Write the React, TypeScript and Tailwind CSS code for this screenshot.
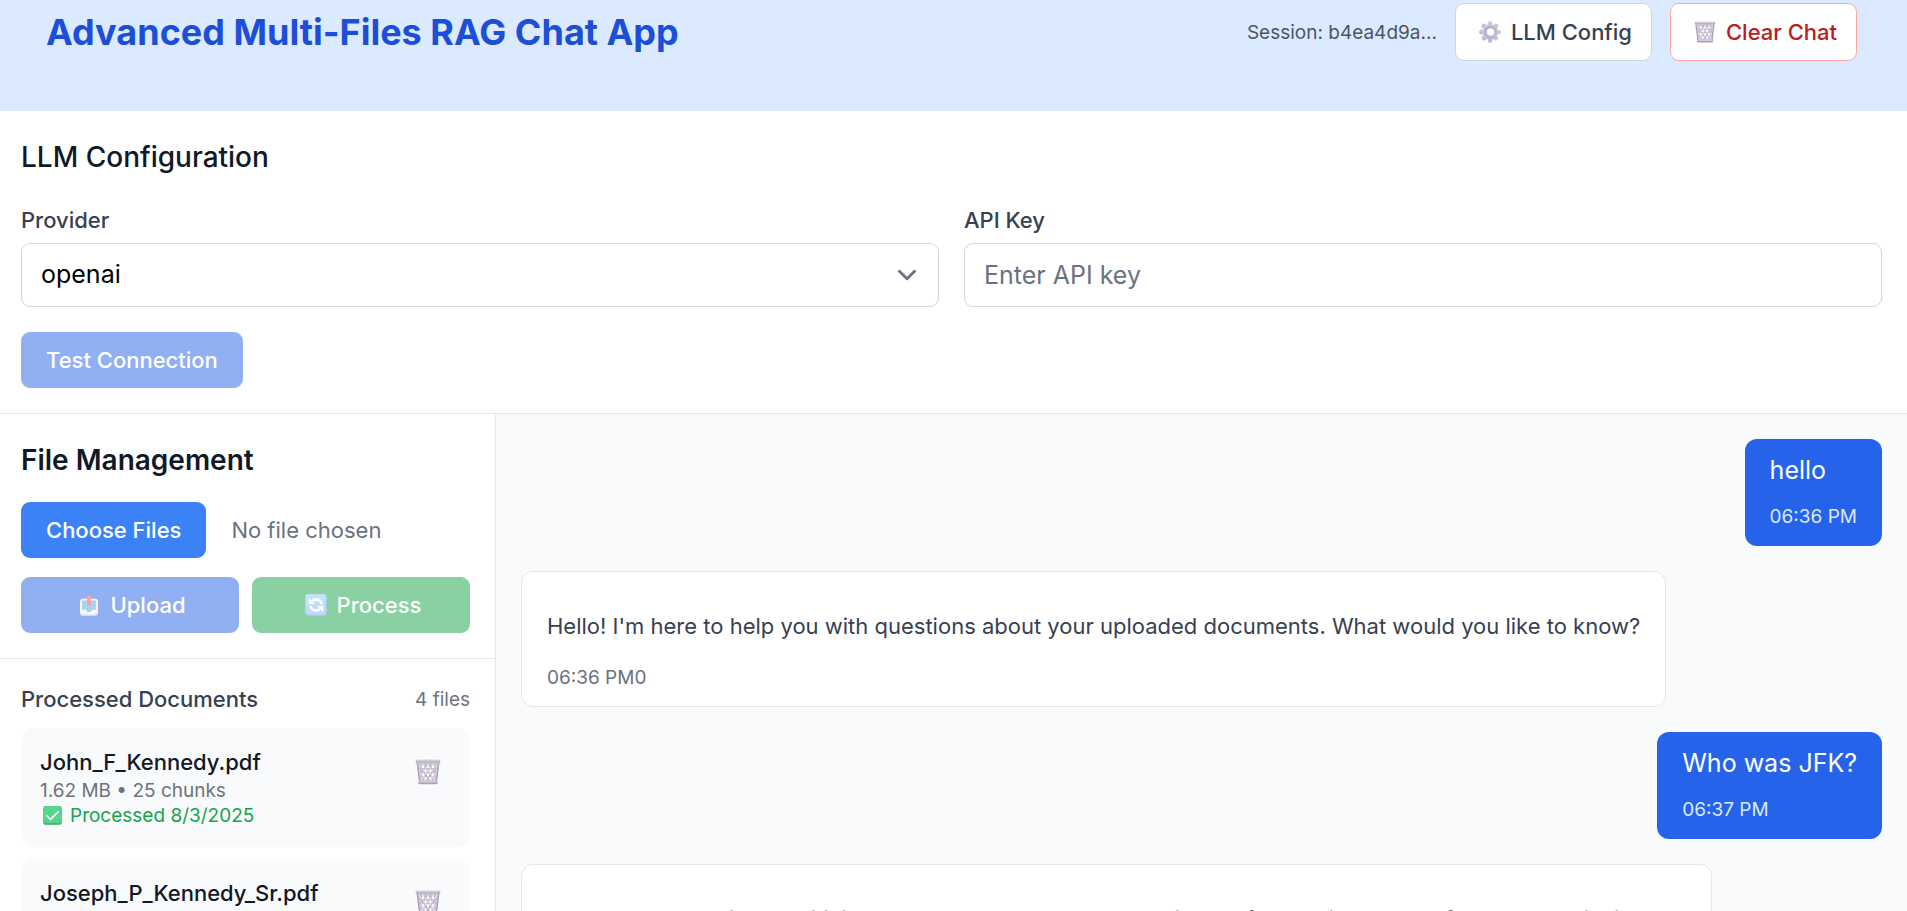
import React from "react";

type IconProps = { className?: string };

function GearIcon({ className }: IconProps) {
  return (
    <svg viewBox="0 0 32 32" className={className} aria-hidden="true">
      <defs>
        <linearGradient id="gear" x1="0" y1="0" x2="1" y2="1">
          <stop offset="0" stopColor="#d6cee2" />
          <stop offset="1" stopColor="#bfb2d1" />
        </linearGradient>
      </defs>
      <g fill="url(#gear)">
        {[0, 45, 90, 135].map((angle) => (
          <rect key={angle} x="12.6" y="0.2" width="6.8" height="31.6" rx="3" transform={`rotate(${angle} 16 16)`} />
        ))}
        <circle cx="16" cy="16" r="11.4" />
      </g>
      <circle cx="16" cy="16" r="8.2" fill="#a598b8" />
      <circle cx="16.6" cy="16.2" r="7.2" fill="#cbc3d6" />
      <circle cx="16.8" cy="16" r="5" fill="#ffffff" />
    </svg>
  );
}

function TrashIcon({ className }: IconProps) {
  return (
    <svg viewBox="0 0 32 32" className={className} aria-hidden="true">
      <path d="M2.6 3.5h26.8L26.4 29H5.6z" fill="#d9d3e2" />
      <g stroke="#b3a9c0" strokeWidth="1.1" fill="none">
        <path d="M6 5l17 22M11.5 5l14 18M17 5l10 13M5 10l14 18" />
        <path d="M26 5L9 27M20.5 5l-14 18M15 5L5 18M27 10L13 28" />
      </g>
      <path d="M2.8 4.5L5.8 28M29.2 4.5L26.2 28" stroke="#aaa0b8" strokeWidth="1.8" fill="none" />
      <g fill="#ffffff">
        <ellipse cx="10" cy="9.5" rx="1.3" ry="1.9" />
        <ellipse cx="16" cy="9.5" rx="1.3" ry="1.9" />
        <ellipse cx="22" cy="9.5" rx="1.3" ry="1.9" />
        <ellipse cx="13" cy="14.5" rx="1.4" ry="2" />
        <ellipse cx="19" cy="14.500" rx="1.4" ry="2" />
        <ellipse cx="10.200" cy="19.200" rx="1.3" ry="1.9" />
        <ellipse cx="16" cy="19.200" rx="1.3" ry="1.9" />
        <ellipse cx="21.800" cy="19.200" rx="1.3" ry="1.9" />
        <ellipse cx="13" cy="24" rx="1.3" ry="1.8" />
        <ellipse cx="19" cy="24" rx="1.3" ry="1.8" />
      </g>
      <rect x="0.8" y="1" width="30.4" height="4" rx="2" fill="#b8b4bc" />
      <rect x="1.8" y="1.5" width="28.4" height="1.5" rx="0.7" fill="#d3cfd6" />
      <rect x="4" y="27.2" width="24" height="4" rx="2" fill="#ab9fc2" />
      <rect x="5" y="27.4" width="22" height="1.4" rx="0.6" fill="#dcd6e5" />
    </svg>
  );
}

function OutboxIcon({ className }: IconProps) {
  return (
    <svg viewBox="0 0 32 32" className={className} aria-hidden="true">
      <rect x="3" y="8" width="26" height="23.5" rx="4" fill="#d6cbdc" />
      <rect x="3" y="7" width="26" height="22" rx="4" fill="#f3eef4" />
      <path d="M6 9.5h20v13.500h-5.500l-2 3h-5l-2-3H6z" fill="#4fa9de" />
      <path d="M16 0.500l5.500 6.800h-2.600V16h-5.800V7.300h-2.600z" fill="#f4475c" />
    </svg>
  );
}

function RefreshIcon({ className }: IconProps) {
  return (
    <svg viewBox="0 0 32 32" className={className} aria-hidden="true">
      <defs>
        <linearGradient id="refresh" x1="0" y1="0" x2="0" y2="1">
          <stop offset="0" stopColor="#8cc9ff" />
          <stop offset="1" stopColor="#7fb0fb" />
        </linearGradient>
      </defs>
      <rect x="0.500" y="0.500" width="31" height="31" rx="3" fill="#6b93ea" />
      <rect x="0.500" y="0.500" width="30" height="29.500" rx="3" fill="url(#refresh)" />
      <g fill="none" stroke="#ffffff" strokeWidth="3.600">
        <path d="M10.500 10.300C15 5.800 23.300 8 24.300 15" />
        <path d="M21.500 21.700C17 26.200 8.700 24 7.700 17" />
      </g>
      <path d="M5.500 5.500v9h9z" fill="#ffffff" />
      <path d="M26.500 26.500v-9h-9z" fill="#ffffff" />
    </svg>
  );
}

function CheckIcon({ className }: IconProps) {
  return (
    <svg viewBox="0 0 32 32" className={className} aria-hidden="true">
      <rect x="0.500" y="0.500" width="31" height="31" rx="3.500" fill="#3da873" />
      <rect x="1.500" y="0.500" width="29" height="28.500" rx="3" fill="#55d68c" />
      <path d="M6.500 16.500l6 6L26 9.500" fill="none" stroke="#ffffff" strokeWidth="2.600" strokeLinecap="round" strokeLinejoin="round" />
    </svg>
  );
}

const documents = [
  { name: "John_F_Kennedy.pdf", meta: "1.62 MB • 25 chunks", date: "8/3/2025" },
  { name: "Joseph_P_Kennedy_Sr.pdf", meta: "1.21 MB • 21 chunks", date: "8/3/2025" },
];

type Message = { role: "user" | "assistant"; text: string; time: string };

const messages: Message[] = [
  { role: "user", text: "hello", time: "06:36 PM" },
  {
    role: "assistant",
    text: "Hello! I'm here to help you with questions about your uploaded documents. What would you like to know?",
    time: "06:36 PM0",
  },
  { role: "user", text: "Who was JFK?", time: "06:37 PM" },
  {
    role: "assistant",
    text: "JFK was an American politician who served as the 35th president of the United States from 1961 until his death in 1963.",
    time: "06:37 PM0",
  },
];

function Header() {
  return (
    <header className="flex shrink-0 items-start justify-between bg-[#dbeafe] pt-[3px] pr-[50px] pb-[50px] pl-[46px]">
      <h1 className="text-[36px] leading-[58px] font-bold text-[#1d4ed8]">Advanced Multi-Files RAG Chat App</h1>
      <div className="flex items-center gap-[18px]">
        <span className="text-[19px] leading-[25px] text-[#4b5563]">Session: b4ea4d9a...</span>
        <button className="flex items-center gap-[6px] rounded-[9px] border border-[#d1d5db] bg-white px-[19px] py-[12px] text-[22px] leading-[32px] font-medium text-[#374151]">
          <GearIcon className="mx-1 size-[22px]" />
          LLM Config
        </button>
        <button className="flex items-center gap-[6px] rounded-[9px] border border-[#fca5a5] bg-white px-[19px] py-[12px] text-[22px] leading-[32px] font-medium text-[#b91c1c]">
          <TrashIcon className="mx-1 size-[22px]" />
          Clear Chat
        </button>
      </div>
    </header>
  );
}

function ConfigPanel() {
  return (
    <section className="shrink-0 border-b border-[#e5e7eb] bg-white py-[25px] pr-[25px] pl-[21px]">
      <h2 className="mb-[25px] text-[28px] leading-[43px] font-medium text-[#111827]">LLM Configuration</h2>
      <div className="grid grid-cols-2 gap-[25px]">
        <div>
          <label htmlFor="provider" className="mb-[6px] block text-[22px] leading-[33px] font-medium text-[#374151]">
            Provider
          </label>
          <div className="relative">
            <select
              id="provider"
              className="block h-16 w-full appearance-none rounded-[9px] border border-[#d1d5db] bg-white px-[19px] text-[25px] text-black"
            >
              <option>openai</option>
            </select>
            <svg
              viewBox="0 0 20 20"
              className="pointer-events-none absolute inset-y-0 right-[13px] my-auto size-[38px]"
              fill="none"
              stroke="#6b7280"
              strokeWidth="1.5"
              strokeLinecap="round"
              strokeLinejoin="round"
              aria-hidden="true"
            >
              <path d="M6 8l4 4 4-4" />
            </svg>
          </div>
        </div>
        <div>
          <label htmlFor="api-key" className="mb-[6px] block text-[22px] leading-[33px] font-medium text-[#374151]">
            API Key
          </label>
          <input
            id="api-key"
            type="password"
            placeholder="Enter API key"
            className="block h-16 w-full rounded-[9px] border border-[#d1d5db] bg-white px-[19px] text-[25px] placeholder:text-[#6b7280]"
          />
        </div>
      </div>
      <button disabled className="mt-[25px] block rounded-[9px] bg-[#2563eb] px-[25px] text-[22px] leading-[56px] font-medium text-white opacity-50">
        Test Connection
      </button>
    </section>
  );
}

function Sidebar() {
  return (
    <aside className="w-[496px] shrink-0 border-r border-[#e5e7eb] bg-white">
      <div className="border-b border-[#e5e7eb] py-[25px] pr-[25px] pl-[21px]">
        <h2 className="mb-5 text-[28px] leading-[43px] font-semibold text-[#111827]">File Management</h2>
        <input
          type="file"
          multiple
          aria-label="Choose files"
          className="mb-[19px] block w-full text-[22px] leading-[56px] text-[#6b7280] file:mr-[25px] file:rounded-[9px] file:border-0 file:bg-[#3b82f6] file:px-[25px] file:text-[22px] file:leading-[56px] file:font-medium file:text-white"
        />
        <div className="grid grid-cols-2 gap-[13px]">
          <button disabled className="flex h-14 items-center justify-center gap-[6px] rounded-[9px] bg-[#2563eb] text-[22px] font-medium text-white opacity-50">
            <OutboxIcon className="mx-1 size-[22px]" />
            Upload
          </button>
          <button disabled className="flex h-14 items-center justify-center gap-[6px] rounded-[9px] bg-[#16a34a] text-[22px] font-medium text-white opacity-50">
            <RefreshIcon className="mx-1 size-[22px]" />
            Process
          </button>
        </div>
      </div>
      <div className="py-[25px] pr-[25px] pl-[21px]">
        <div className="mb-[13px] flex items-center justify-between">
          <h3 className="text-[22px] leading-[31px] font-medium text-[#374151]">Processed Documents</h3>
          <span className="text-[19px] leading-[25px] text-[#6b7280]">4 files</span>
        </div>
        <ul className="flex flex-col gap-[12px]">
          {documents.map((doc) => (
            <li key={doc.name} className="flex items-start justify-between rounded-[12px] bg-[#f9fafb] p-[19px]">
              <div>
                <p className="text-[22px] leading-[31px] font-medium text-[#111827]">{doc.name}</p>
                <p className="text-[19px] leading-[25px] text-[#6b7280]">{doc.meta}</p>
                <p className="flex items-center gap-[5px] text-[19px] leading-[25px] text-[#16a34a]">
                  <CheckIcon className="mx-[3px] size-[19px]" />
                  Processed {doc.date}
                </p>
              </div>
              <button aria-label={`Delete ${doc.name}`} className="mt-[6px] p-[6px] pr-[10px]">
                <TrashIcon className="size-[26px]" />
              </button>
            </li>
          ))}
        </ul>
      </div>
    </aside>
  );
}

function Chat() {
  return (
    <main className="flex min-w-0 flex-1 flex-col gap-[25px] overflow-hidden bg-[#f9fafb] p-[25px]">
      {messages.map((message, index) =>
        message.role === "user" ? (
          <div key={index} className="shrink-0 self-end rounded-[12px] bg-[#2563eb] px-[25px] pt-[12px] pb-[17px] text-white">
            <p className="text-[25px] leading-[39px]">{message.text}</p>
            <p className="mt-[14px] text-[19px] leading-[25px] text-[#dbeafe]">{message.time}</p>
          </div>
        ) : (
          <div key={index} className="max-w-[1191px] shrink-0 self-start rounded-[12px] border border-[#e5e7eb] bg-white px-[25px] pt-9 pb-4">
            <p className="text-[22px] leading-[36px] text-[#374151]">{message.text}</p>
            <p className="mt-[21px] text-[19px] leading-[25px] text-[#6b7280]">{message.time}</p>
          </div>
        ),
      )}
    </main>
  );
}

export default function App() {
  return (
    <div className="flex h-screen flex-col overflow-hidden bg-white font-['Inter',sans-serif]">
      <Header />
      <ConfigPanel />
      <div className="flex min-h-0 flex-1">
        <Sidebar />
        <Chat />
      </div>
    </div>
  );
}
